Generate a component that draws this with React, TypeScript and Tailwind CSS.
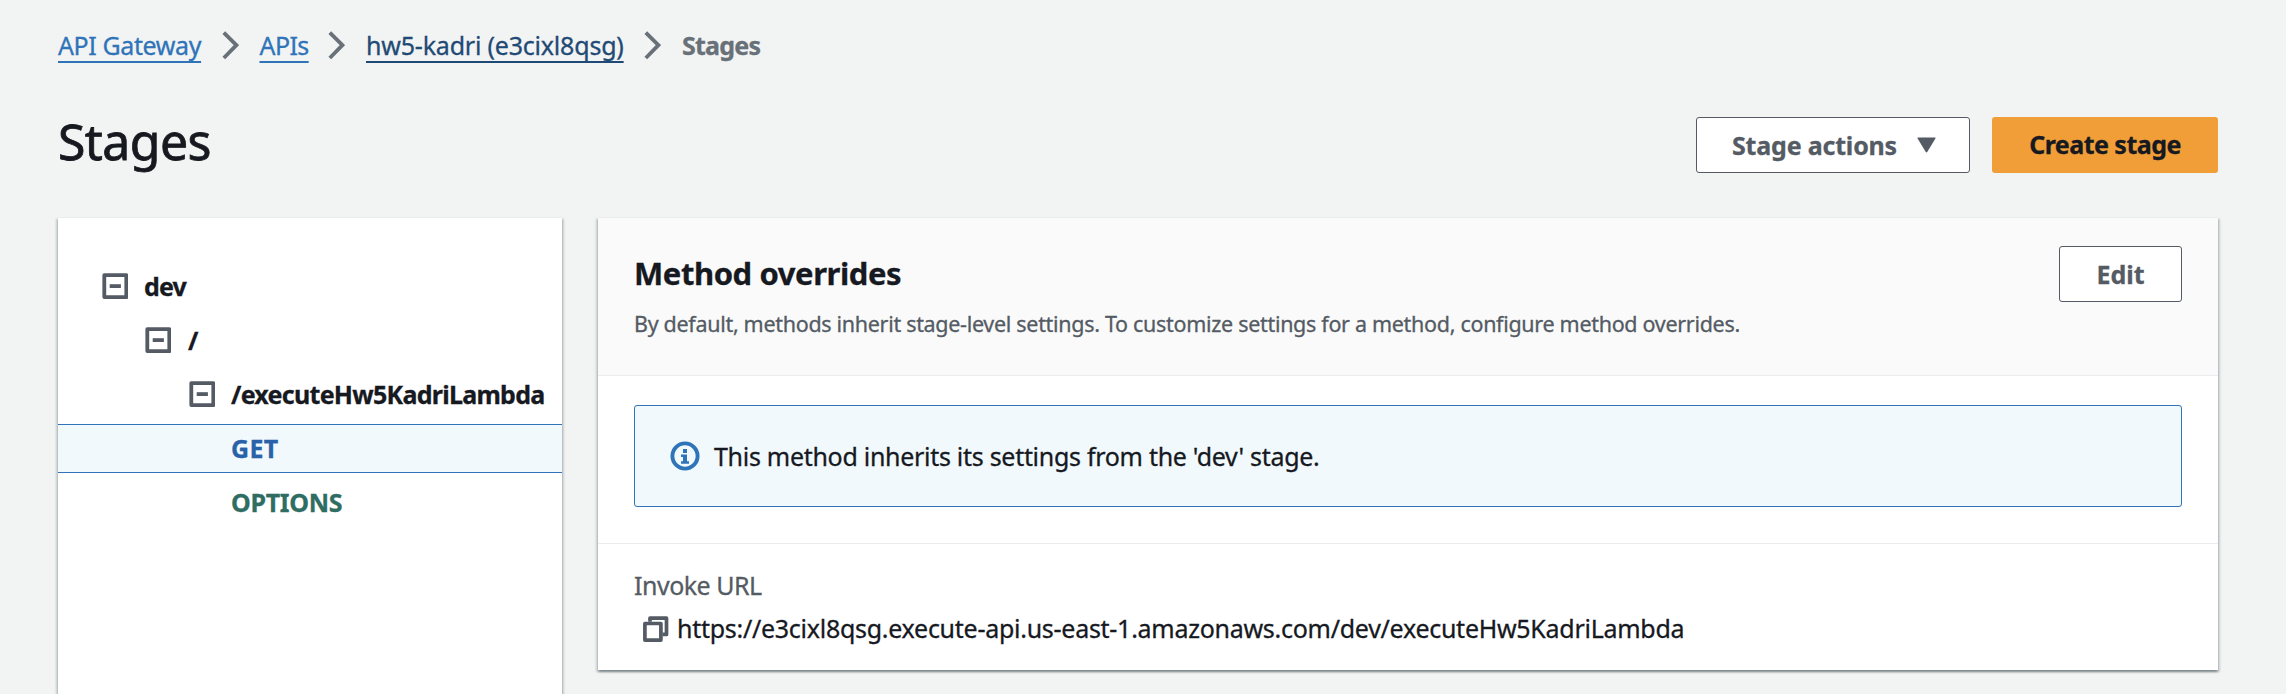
import React from 'react';

const CARD =
  'bg-white border-t border-[#eaeded] shadow-[0_2px_2px_0_rgba(0,28,36,0.3),2px_2px_2px_0_rgba(0,28,36,0.15),-2px_2px_2px_0_rgba(0,28,36,0.15)]';

function Chevron() {
  return (
    <svg className="ml-5 mr-[21px] h-[29px] w-[17px] shrink-0" viewBox="0 0 17 29" fill="none" stroke="#687078" strokeWidth="3.8">
      <path d="M1.8 1.6 L14.4 14.2 L1.8 27" />
    </svg>
  );
}

function Collapse() {
  return (
    <svg className="h-[26px] w-[26px] shrink-0" viewBox="0 0 26 26" fill="none" stroke="#545b64" strokeWidth="3.8">
      <rect x="2.3" y="2.1" width="22" height="22" strokeLinejoin="round" />
      <path d="M7.7 13.1 H18.9" />
    </svg>
  );
}

function InfoIcon() {
  return (
    <svg className="h-[30px] w-[30px] shrink-0" viewBox="0 0 30 30" fill="none">
      <circle cx="15" cy="15" r="12.6" stroke="#2f73b9" strokeWidth="3.9" />
      <path fill="#2f73b9" d="M13 8h4v4h-4zM11 13.4h6v6.8h2v2.6h-8v-2.6h2v-4.2h-2z" />
    </svg>
  );
}

function CopyIcon() {
  return (
    <svg className="mt-px h-[26px] w-[26px] shrink-0" viewBox="0 0 26 26" fill="none" stroke="#545b64" strokeWidth="3.7" strokeLinejoin="round">
      <path d="M7 5.8 V2.1 H23.5 V18.4 H19.5" />
      <rect x="1.9" y="7.5" width="16" height="16.6" />
    </svg>
  );
}

export default function App() {
  return (
    <div className="flex h-[694px] w-[2286px] flex-col overflow-hidden bg-[#f2f3f3] px-[58px] pt-[27px] font-['Noto_Sans',sans-serif] text-[25px] leading-[36px] [-webkit-text-stroke:0.3px_currentColor] whitespace-nowrap text-[#16191f]">
      <nav className="flex h-9 items-center">
        <a className="w-[143.5px] tracking-[-0.39px] text-[#2f73b9] underline decoration-2 underline-offset-[6px] [text-decoration-skip-ink:none]">API Gateway</a>
        <Chevron />
        <a className="w-[48.5px] tracking-[-0.6px] text-[#2f73b9] underline decoration-2 underline-offset-[6px] [text-decoration-skip-ink:none]">APIs</a>
        <Chevron />
        <a className="w-[258px] tracking-[-0.2px] text-[#1f4a75] underline decoration-2 underline-offset-[6px] [text-decoration-skip-ink:none]">hw5-kadri (e3cixl8qsg)</a>
        <Chevron />
        <span className="font-bold tracking-[-0.77px] text-[#687078]">Stages</span>
      </nav>

      <header className="mt-12 flex h-[62px] items-center justify-between pr-[10px]">
        <h1 className="-mt-[2px] text-[50px] leading-[62px] tracking-[-0.6px] [-webkit-text-stroke:0.8px_currentColor]">Stages</h1>
        <div className="mt-[6px] flex gap-[22px] font-bold">
          <button className="flex h-14 w-[274px] items-center rounded-[3px] border border-[#545b64] bg-white pl-[35px] text-[#545b64]">
            <span className="w-[185px] pb-px text-left tracking-[-0.19px]">Stage actions</span>
            <svg className="h-4 w-[19px]" viewBox="0 0 19 16" fill="#545b64">
              <path d="M1.2 .5 H17.8 Q19 .5 18.4 1.6 L10.4 14.8 Q9.5 16 8.6 14.8 L.6 1.6 Q0 .5 1.2 .5 Z" />
            </svg>
          </button>
          <button className="h-14 w-[226px] rounded-[3px] bg-[#f19e38] pb-[2px] tracking-[-0.53px]">Create stage</button>
        </div>
      </header>

      <main className="mt-11 flex flex-1 items-start gap-9">
        <aside className={`${CARD} h-[520px] w-[504px] pt-[41px] font-bold`}>
          <div className="flex h-[54px] items-center pl-[44px]">
            <Collapse />
            <span className="ml-4 tracking-[-0.9px]">dev</span>
          </div>
          <div className="flex h-[54px] items-center pl-[87px]">
            <Collapse />
            <span className="ml-[17px]">/</span>
          </div>
          <div className="flex h-[54px] items-center pl-[131px]">
            <Collapse />
            <span className="ml-4 tracking-[-0.72px]">/executeHw5KadriLambda</span>
          </div>
          <div className="h-[54px] pt-[3px]">
            <div className="h-[49px] border-y border-[#2f73b9] bg-[#f1f9fd] pl-[173px] leading-[47px] tracking-[0.3px] text-[#2a62a9]">GET</div>
          </div>
          <div className="h-[54px] pl-[173px] leading-[54px] tracking-[-0.3px] text-[#2f6d63]">OPTIONS</div>
        </aside>

        <section className={`${CARD} w-[1620px]`}>
          <div className="flex h-[158px] justify-between border-b border-[#eaeded] bg-[#fafafa] pl-[37px] pr-9 pt-[28px]">
            <div>
              <h2 className="mt-[7px] -ml-[1px] text-[31px] leading-10 font-bold tracking-[-0.42px]">Method overrides</h2>
              <p className="-ml-[1px] mt-[15px] text-[21.5px] leading-8 tracking-[-0.305px] text-[#545b64]">
                By default, methods inherit stage-level settings. To customize settings for a method, configure method overrides.
              </p>
            </div>
            <button className="h-14 w-[123px] rounded-[3px] border border-[#545b64] bg-white pb-px font-bold text-[#545b64]">Edit</button>
          </div>
          <div className="border-b border-[#eaeded] px-9 pb-9 pt-[29px]">
            <div className="flex h-[102px] items-center rounded-[3px] border border-[#2f73b9] bg-[#f1f9fd] pl-[35px]">
              <InfoIcon />
              <span className="ml-[14px] -mt-px tracking-[-0.29px]">This method inherits its settings from the 'dev' stage.</span>
            </div>
          </div>
          <div className="h-[126px] pl-9 pt-[23px]">
            <div className="tracking-[-0.5px] text-[#545b64]">Invoke URL</div>
            <div className="mt-[7px] flex items-center pl-[9px]">
              <CopyIcon />
              <span className="ml-[8px] tracking-[-0.27px]">https://e3cixl8qsg.execute-api.us-east-1.amazonaws.com/dev/executeHw5KadriLambda</span>
            </div>
          </div>
        </section>
      </main>
    </div>
  );
}
